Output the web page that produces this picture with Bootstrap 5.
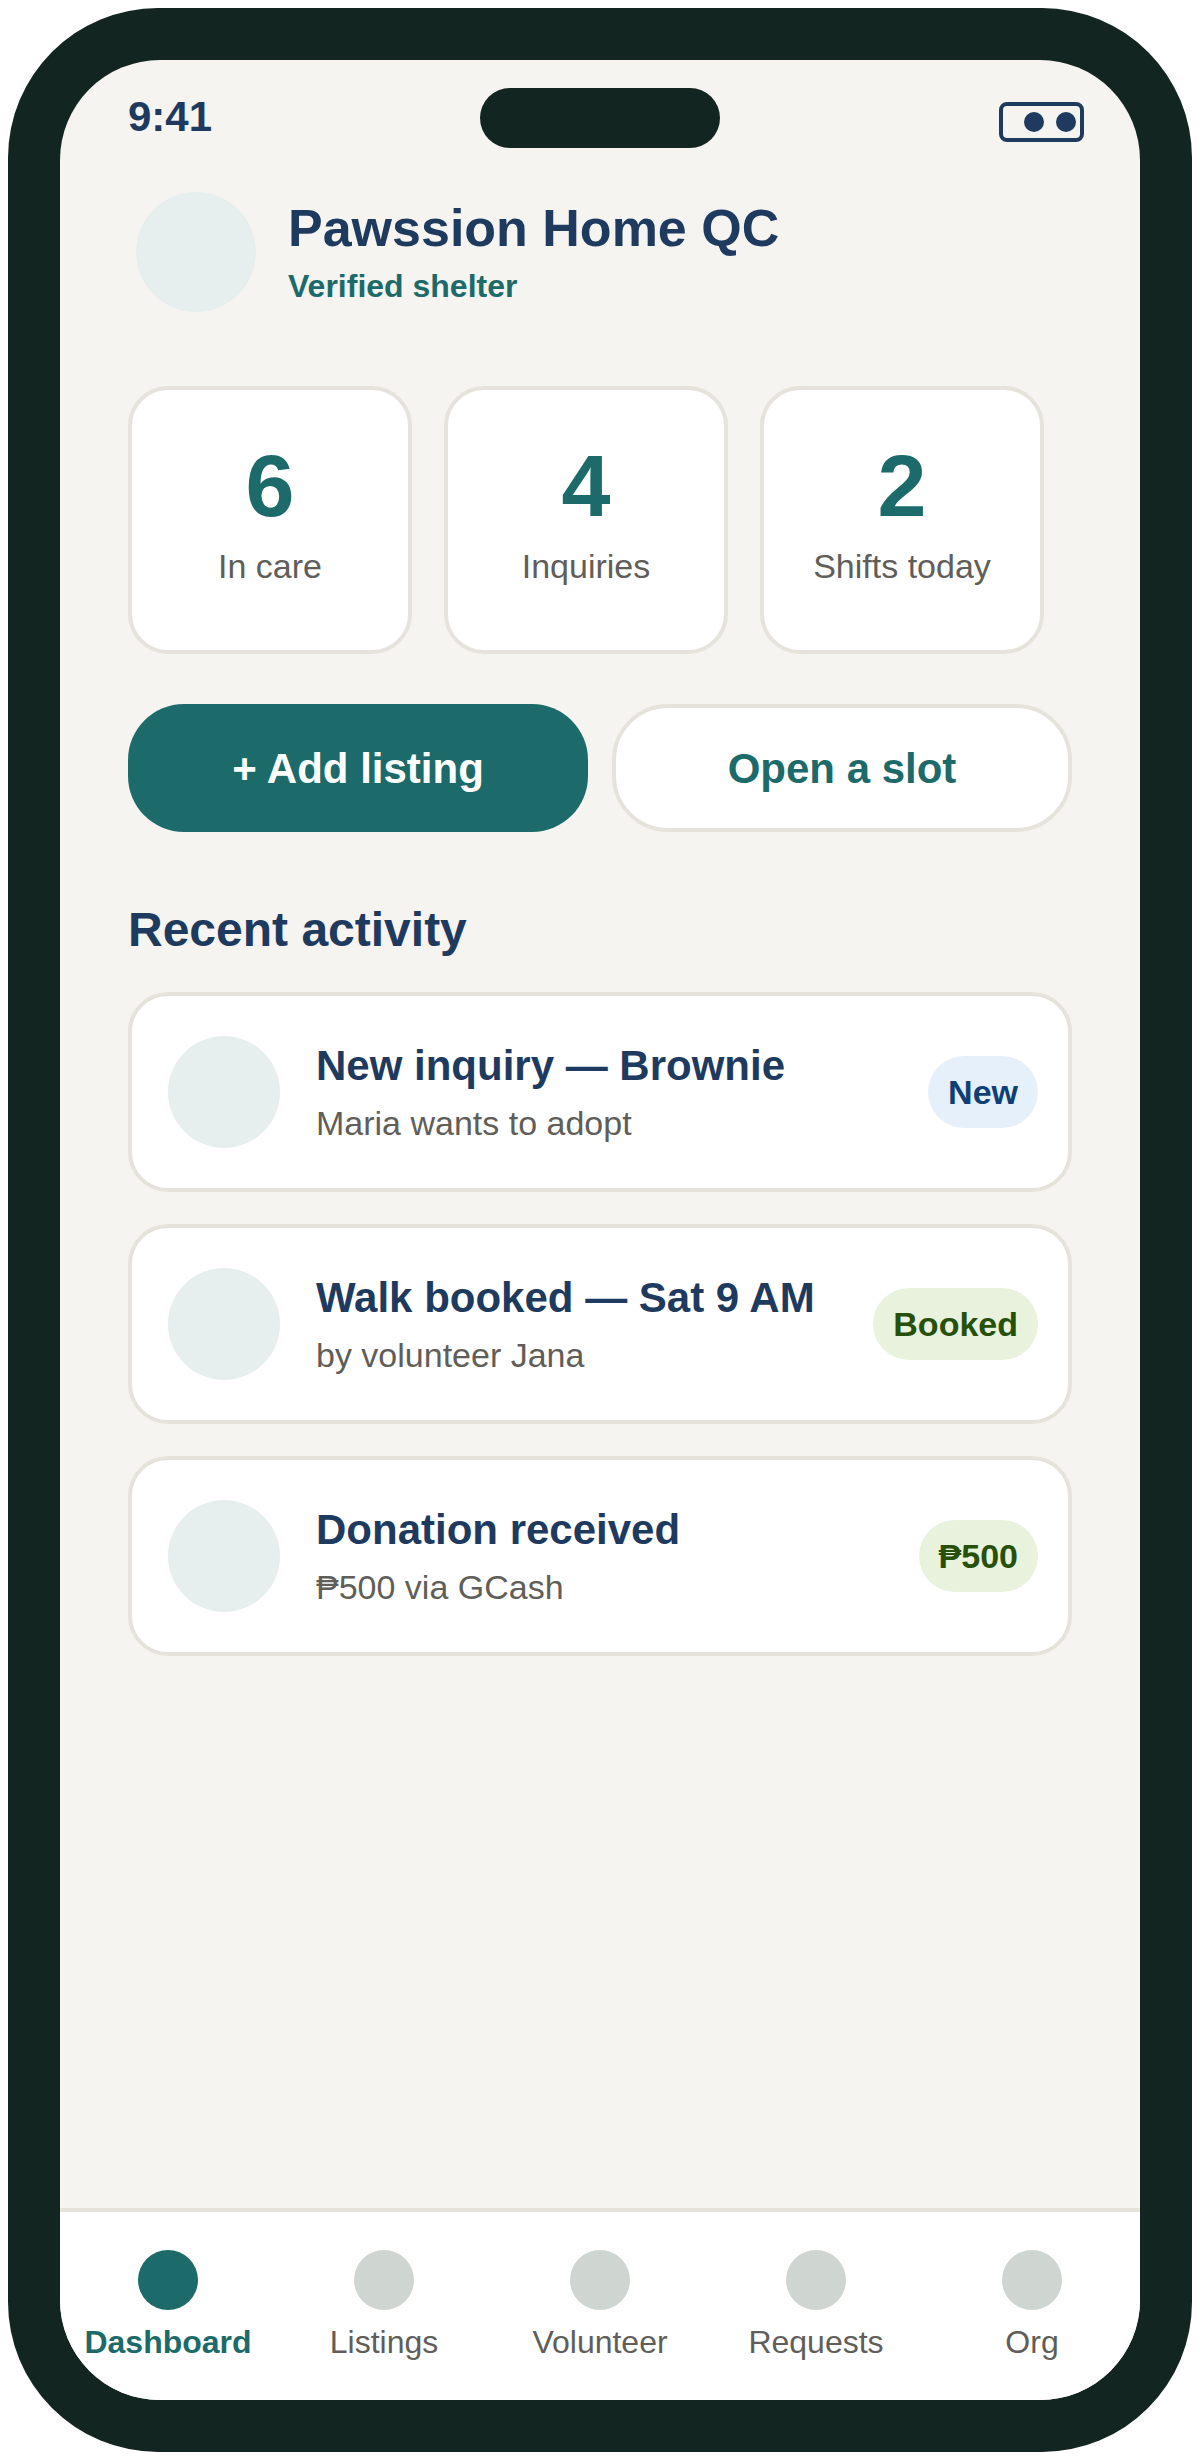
<!DOCTYPE html>
<html lang="en">
<head>
  <meta charset="UTF-8" />
  <title>Pawssion Home QC</title>
  <link href="https://cdn.jsdelivr.net/npm/bootstrap@5.3.0/dist/css/bootstrap.min.css" rel="stylesheet" />
  <style>
    body {
      width: 1200px;
      height: 2460px;
      background: #fff;
      font-family: "Liberation Sans", Arial, sans-serif;
      padding: 8px;
      overflow: hidden;
    }

    .phone-frame {
      width: 1184px;
      height: 2444px;
      background: #132521;
      border-radius: 150px;
      padding: 52px;
    }

    .phone-screen {
      height: 100%;
      background: #f5f4f0;
      border-radius: 100px;
      overflow: hidden;
      position: relative;
    }

    .status-row {
      height: 100px;
      padding: 36px 56px 0 68px;
    }

    .status-time {
      font-size: 42px;
      line-height: 1;
      font-weight: 700;
      color: #1f3a5f;
    }

    .notch {
      position: absolute;
      left: 420px;
      top: 28px;
      width: 240px;
      height: 60px;
      border-radius: 30px;
      background: #132521;
    }

    .battery {
      width: 85px;
      height: 40px;
      margin-top: 6px;
      border: 4px solid #1f3a5f;
      border-radius: 8px;
      padding-right: 4px;
      gap: 12px;
    }

    .battery span {
      width: 20px;
      height: 20px;
      border-radius: 50%;
      background: #1f3a5f;
    }

    .header-row {
      padding-left: 76px;
      gap: 32px;
      height: 120px;
      margin-top: 32px;
    }

    .shelter-pic {
      width: 120px;
      height: 120px;
      border-radius: 50%;
      background: #e6efee;
      flex: none;
    }

    .shelter-name {
      font-size: 52px;
      line-height: 60px;
      font-weight: 700;
      color: #1f3a5f;
    }

    .shelter-sub {
      font-size: 32px;
      line-height: 40px;
      margin-top: 8px;
      font-weight: 700;
      color: #1c6b6a;
    }

    .stat-row {
      padding-left: 68px;
      gap: 32px;
      margin-top: 74px;
    }

    .stat-box {
      width: 284px;
      height: 268px;
      background: #fff;
      border: 4px solid #e5e3dc;
      border-radius: 40px;
      text-align: center;
      padding-top: 46px;
    }

    .stat-num {
      font-size: 88px;
      line-height: 100px;
      font-weight: 700;
      color: #1c6b6a;
    }

    .stat-label {
      font-size: 34px;
      line-height: 40px;
      margin-top: 10px;
      color: #5f5e5a;
    }

    .action-row {
      padding: 0 68px;
      gap: 24px;
      margin-top: 50px;
    }

    .btn-act {
      width: 460px;
      height: 128px;
      border-radius: 56px;
      font-size: 42px;
      font-weight: 700;
      padding: 0;
      --bs-btn-active-bg: #1c6b6a;
    }

    .btn-add {
      background: #1c6b6a;
      border: 0;
      color: #fff;
    }

    .btn-slot {
      background: #fff;
      border: 4px solid #e5e3dc;
      color: #1c6b6a;
    }

    .section-title {
      font-size: 48px;
      line-height: 56px;
      font-weight: 700;
      color: #1f3a5f;
      margin: 70px 0 0 68px;
    }

    .activity-list {
      padding: 0 68px;
      margin-top: 34px;
      gap: 32px;
    }

    .activity-row {
      height: 200px;
      background: #fff;
      border: 4px solid #e5e3dc;
      border-radius: 40px;
      padding: 0 30px 0 36px;
      gap: 36px;
    }

    .activity-pic {
      width: 112px;
      height: 112px;
      border-radius: 50%;
      background: #e6efee;
      flex: none;
    }

    .activity-title {
      font-size: 42px;
      line-height: 50px;
      font-weight: 700;
      color: #1f3a5f;
    }

    .activity-sub {
      font-size: 34px;
      line-height: 40px;
      margin-top: 12px;
      color: #5f5e5a;
    }

    .pill-tag {
      height: 72px;
      line-height: 72px;
      border-radius: 36px;
      padding: 0 20px;
      font-size: 34px;
      font-weight: 700;
    }

    .pill-new {
      background: #e6f0fa;
      color: #0f3f75;
    }

    .pill-ok {
      background: #e8f2dc;
      color: #27500a;
    }

    .tab-bar {
      position: absolute;
      left: 0;
      right: 0;
      bottom: 0;
      height: 192px;
      background: #fff;
      border-top: 4px solid #e5e3dc;
      padding-top: 38px;
    }

    .tab-item {
      width: 216px;
      text-align: center;
      font-size: 32px;
      line-height: 40px;
      color: #5f5e5a;
    }

    .tab-dot {
      width: 60px;
      height: 60px;
      border-radius: 50%;
      background: #cfd5d1;
      margin: 0 auto 12px;
    }

    .tab-on {
      color: #1c6b6a;
      font-weight: 700;
    }

    .tab-on .tab-dot {
      background: #1c6b6a;
    }
  </style>
</head>
<body>
  <div class="phone-frame">
    <div class="phone-screen">
      <div class="notch"></div>

      <div class="status-row d-flex justify-content-between align-items-start">
        <div class="status-time">9:41</div>
        <div class="battery d-flex justify-content-end align-items-center"><span></span><span></span></div>
      </div>

      <div class="header-row d-flex align-items-center">
        <div class="shelter-pic"></div>
        <div>
          <div class="shelter-name">Pawssion Home QC</div>
          <div class="shelter-sub">Verified shelter</div>
        </div>
      </div>

      <div class="stat-row d-flex">
        <div class="stat-box"><div class="stat-num">6</div><div class="stat-label">In care</div></div>
        <div class="stat-box"><div class="stat-num">4</div><div class="stat-label">Inquiries</div></div>
        <div class="stat-box"><div class="stat-num">2</div><div class="stat-label">Shifts today</div></div>
      </div>

      <div class="action-row d-flex">
        <button class="btn btn-act btn-add">+ Add listing</button>
        <button class="btn btn-act btn-slot">Open a slot</button>
      </div>

      <div class="section-title">Recent activity</div>

      <div class="activity-list d-flex flex-column">
        <div class="activity-row d-flex align-items-center">
          <div class="activity-pic"></div>
          <div class="flex-grow-1">
            <div class="activity-title">New inquiry — Brownie</div>
            <div class="activity-sub">Maria wants to adopt</div>
          </div>
          <div class="pill-tag pill-new">New</div>
        </div>
        <div class="activity-row d-flex align-items-center">
          <div class="activity-pic"></div>
          <div class="flex-grow-1">
            <div class="activity-title">Walk booked — Sat 9 AM</div>
            <div class="activity-sub">by volunteer Jana</div>
          </div>
          <div class="pill-tag pill-ok">Booked</div>
        </div>
        <div class="activity-row d-flex align-items-center">
          <div class="activity-pic"></div>
          <div class="flex-grow-1">
            <div class="activity-title">Donation received</div>
            <div class="activity-sub">₱500 via GCash</div>
          </div>
          <div class="pill-tag pill-ok">₱500</div>
        </div>
      </div>

      <div class="tab-bar d-flex">
        <div class="tab-item tab-on"><div class="tab-dot"></div>Dashboard</div>
        <div class="tab-item"><div class="tab-dot"></div>Listings</div>
        <div class="tab-item"><div class="tab-dot"></div>Volunteer</div>
        <div class="tab-item"><div class="tab-dot"></div>Requests</div>
        <div class="tab-item"><div class="tab-dot"></div>Org</div>
      </div>
    </div>
  </div>
  <script src="https://cdn.jsdelivr.net/npm/bootstrap@5.3.0/dist/js/bootstrap.bundle.min.js"></script>
</body>
</html>
